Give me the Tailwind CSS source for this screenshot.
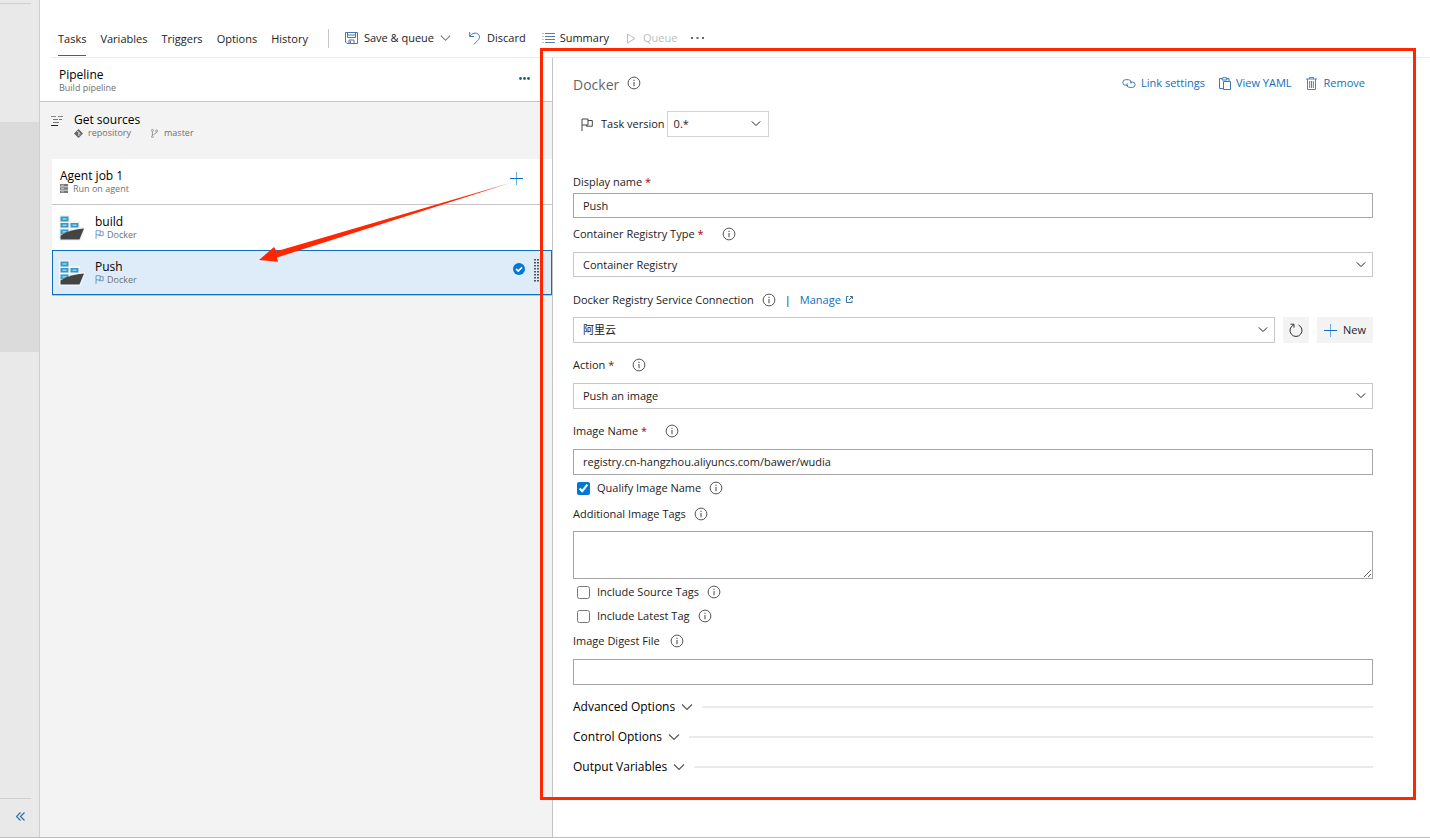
<!DOCTYPE html>
<html lang="en">
<head>
<meta charset="utf-8">
<title>Build pipeline - Docker task</title>
<script src="https://cdn.jsdelivr.net/npm/@tailwindcss/browser@4"></script>
</head>
<body class="bg-white text-[11px] leading-4 text-[#222] font-['Open_Sans','Noto_Sans_CJK_SC',sans-serif]">

<!-- Shared icons -->
<svg class="hidden" aria-hidden="true">
  <symbol id="info" viewBox="0 0 14 14"><circle cx="7" cy="7" r="5.9" fill="none" stroke="#555" stroke-width="1"/><path d="M7 6v4.2M7 3.8v1.2" stroke="#555" stroke-width="1.1"/></symbol>
  <symbol id="chevron" viewBox="0 0 12 8"><path d="M1 1.5l5 5 5-5" fill="none" stroke="currentColor" stroke-width="1.2"/></symbol>
  <symbol id="flag" viewBox="0 0 12 13"><path d="M1 13V1h6v6H1M7 2.5h4.3v5.7H5.5V7" fill="none" stroke="currentColor" stroke-width="1"/></symbol>
  <symbol id="plus" viewBox="0 0 13 13"><path d="M6.5 0v13" stroke="#69aee6"/><path d="M0 6.5h13" stroke="#106ebe"/></symbol>
  <symbol id="ship" viewBox="0 0 26 26">
    <path d="M0 0h11v6h10v6h5l-4 14H0z" fill="#f1f3f4"/>
    <g fill="#3999c6"><path d="M1.5 1.5h8v5h-8zM1.5 8h8v4.500h-8zM11.500 8h8v4.500h-8zM1.500 14.500h8v3l-8 2z"/></g>
    <g fill="#8fd3ee"><path d="M3.500 3.200h4v1.600h-4zM3.500 9.500h4v1.500h-4zM13.500 9.500h4v1.500h-4zM3.500 16h4v1l-4 1z"/></g>
    <path d="M1.500 20.500Q12 14 25 13.500L20.500 24.500h-19z" fill="#444"/>
  </symbol>
</svg>

<div class="relative flex min-h-screen border-b border-[#bdbdbd]">

  <nav class="flex w-10 shrink-0 flex-col border-r border-[#cfcfcf] bg-[#e9e9e9]" aria-label="Project">
    <div class="h-[122px] pt-[3px]"><div class="mr-2 h-px bg-[#cfcfcf]"></div></div>
    <div class="h-[230px] bg-[#dbdbdb]"></div>
    <div class="mt-auto">
      <div class="mr-2 h-px bg-[#cfcfcf]"></div>
      <button type="button" class="flex h-[38px] w-full items-center justify-center pb-1 pl-[2px]" aria-label="Collapse">
        <svg class="h-[9px] w-[9px]" viewBox="0 0 9 9"><path d="M4.500.5l-4 4 4 4M8.500.5l-4 4 4 4" fill="none" stroke="#2b6da8" stroke-width="1.200"/></svg>
      </button>
    </div>
  </nav>

  <main class="flex min-w-0 grow flex-col">
    <header class="ml-[11px] flex h-[58px] items-end border-b border-[#eaeaea] pl-[7px]">
      <div class="mb-px flex gap-[14px]" role="tablist">
        <button role="tab" aria-selected="true" class="h-[26px] border-b border-[#106ebe] pb-[7px]">Tasks</button>
        <button role="tab" class="h-[26px] border-b border-transparent pb-[7px]">Variables</button>
        <button role="tab" class="h-[26px] border-b border-transparent pb-[7px]">Triggers</button>
        <button role="tab" class="h-[26px] border-b border-transparent pb-[7px]">Options</button>
        <button role="tab" class="h-[26px] border-b border-transparent pb-[7px]">History</button>
      </div>
      <div class="mb-[9px] ml-5 h-[19px] w-px bg-[#c8c8c8]"></div>
      <div class="flex h-[38px] items-center">
        <button type="button" class="ml-4 flex items-center">
          <svg class="mr-[6px] h-3 w-[13px]" viewBox="0 0 13 12" fill="none" stroke="#4a78a8"><path d="M.5.5h12v11H2l-1.500-1.500zM2.500.5v5h8v-5M4 11.500v-3.500h5v3.500M5.500 9v2M2.500 3h8"/></svg>
          Save &amp; queue
          <svg class="ml-[6px] h-2 w-[11px] text-[#777]"><use href="#chevron"/></svg>
        </button>
        <button type="button" class="ml-[18px] flex items-center">
          <svg class="mr-[7px] h-[13px] w-[11px]" viewBox="0 0 11 13" fill="none" stroke="#3c78b8"><path d="M.7 0v4.500H5M.7 4.300C3 1 7 .2 9.200 2.200c2.400 2.200 1.200 4.600-.4 6.200L5 12.300"/></svg>
          Discard
        </button>
        <button type="button" class="ml-4 flex items-center">
          <svg class="mr-[5px] h-[10px] w-[13px]" viewBox="0 0 13 10" stroke="#5a7ea8"><path d="M0 .5h2M0 3.500h2M0 6.500h2M0 9.500h2" stroke="#b9c4d0"/><path d="M3 .5h10M3 3.500h10M3 6.500h10M3 9.500h10"/></svg>
          Summary
        </button>
        <button type="button" disabled class="ml-[18px] flex items-center text-[#bdbdbd]">
          <svg class="mr-[7px] h-[11px] w-[9px]" viewBox="0 0 9 11"><path d="M.5 1v9l7.500-4.500z" fill="none" stroke="#bdbdbd"/></svg>
          Queue
        </button>
        <button type="button" class="ml-[14px]" aria-label="More"><svg class="h-[2px] w-[14px]" viewBox="0 0 14 2"><path d="M0 0h2v2H0zM5.500 0h2v2h-2zM11 0h2v2h-2z" fill="#666"/></svg></button>
      </div>
    </header>

    <div class="flex grow">
      <section class="w-[513px] shrink-0 border-r border-[#c4c4c4] bg-[#f3f3f3]" aria-label="Pipeline">
        <div class="flex h-11 items-center justify-between border-b border-[#c4c4c4] bg-white pr-[22px] pl-[19px]">
          <div class="pt-[3px]">
            <div class="text-[12px] leading-[14px] text-black">Pipeline</div>
            <div class="text-[9px] leading-3 text-[#707070]">Build pipeline</div>
          </div>
          <button type="button" class="pb-[2px]" aria-label="Pipeline menu"><svg class="h-[3px] w-[11px]" viewBox="0 0 11 3" fill="#1a5c9c"><circle cx="1.500" cy="1.500" r="1.400"/><circle cx="5.500" cy="1.500" r="1.400"/><circle cx="9.500" cy="1.500" r="1.400"/></svg></button>
        </div>

        <div class="flex h-[57px] pt-[11px] pl-[11px]">
          <svg class="mt-[3px] mr-[11px] h-[10px] w-3" viewBox="0 0 12 10"><path d="M0 .5h5M7 .5h5" stroke="#888"/><path d="M2 3.500h5M8 3.500h3M2 6.500h6" stroke="#777"/><path d="M0 9.500h7" stroke="#222"/></svg>
          <div>
            <div class="text-[12px] leading-[14px] text-black">Get sources</div>
            <div class="flex items-center text-[9px] leading-3 text-[#707070]">
              <svg class="mr-[5px] h-[9px] w-[9px]" viewBox="0 0 9 9"><path d="M4.500 0L9 4.500 4.500 9 0 4.500z" fill="#666"/><path d="M3.300 2l1.500 1.500v3.500M4.800 3.500l1.700 1.500" fill="none" stroke="#f3f3f3" stroke-width=".9"/></svg>
              repository
              <svg class="mr-[6px] ml-5 h-[9px] w-[7px]" viewBox="0 0 7 9" fill="none" stroke="#888" stroke-width=".8"><circle cx="1.400" cy="1.400" r="1"/><circle cx="5.600" cy="2" r="1"/><circle cx="1.400" cy="7.600" r="1"/><path d="M1.400 2.400v4.200M5.600 3c0 2-3 1.800-4.200 3"/></svg>
              master
            </div>
          </div>
        </div>

        <div class="ml-3">
          <div class="flex h-[46px] items-center justify-between border-b border-[#c4c4c4] bg-white pr-[29px] pl-2">
            <div>
              <div class="text-[12px] leading-[14px] text-black">Agent job 1</div>
              <div class="flex items-center text-[9px] leading-3 text-[#707070]">
                <svg class="mr-[5px] h-[9px] w-2" viewBox="0 0 8 9"><path d="M0 0h8v2.400H0zM0 3.300h8v2.400H0zM0 6.600h8v2.400H0z" fill="#777"/><path d="M1 1.200h3M1 4.500h3M1 7.800h3" stroke="#ddd" stroke-width=".7"/></svg>
                Run on agent
              </div>
            </div>
            <button type="button" class="-mt-[6px]" aria-label="Add task"><svg class="h-[13px] w-[13px]"><use href="#plus"/></svg></button>
          </div>
          <div class="flex h-[45px] items-center bg-white pl-[7px]">
            <svg class="mr-[10px] h-[26px] w-[26px]"><use href="#ship"/></svg>
            <div>
              <div class="text-[12px] leading-[14px] text-black">build</div>
              <div class="flex items-center text-[9px] leading-3 text-[#707070]"><svg class="mr-[3px] h-[9px] w-[9px] text-[#3f78b5]"><use href="#flag"/></svg>Docker</div>
            </div>
          </div>
          <div class="flex h-[45px] items-center border border-[#106ebe] bg-[#deecf9] pr-[8px] pl-[6px] shadow-[0_1px_0_#c4c4c4]">
            <svg class="mr-[10px] h-[26px] w-[26px]"><use href="#ship"/></svg>
            <div>
              <div class="text-[12px] leading-[14px] text-black">Push</div>
              <div class="flex items-center text-[9px] leading-3 text-[#707070]"><svg class="mr-[3px] h-[9px] w-[9px] text-[#3f78b5]"><use href="#flag"/></svg>Docker</div>
            </div>
            <svg class="mr-[9px] mb-[7px] ml-auto h-3 w-3" viewBox="0 0 12 12"><circle cx="6" cy="6" r="6" fill="#0078d7"/><path d="M3 5.800l2.200 2.200L9 4.300" fill="none" stroke="#fff" stroke-width="1.700"/></svg>
            <svg class="mb-1 h-6 w-[9px]" viewBox="0 0 9 24"><path d="M1 0v24M4 0v24M7 0v24" stroke="#222" stroke-width="1.500" stroke-dasharray="1.400 1.600"/></svg>
          </div>
        </div>
      </section>

      <form class="min-w-0 grow pr-[57px] pl-5">
        <div class="flex h-[50px] items-center text-[#106ebe]">
          <h1 class="mt-1 mr-2 text-[14px] leading-5 text-[#666]">Docker</h1>
          <svg class="h-[14px] w-[14px]"><use href="#info"/></svg>
          <button type="button" class="ml-auto flex items-center">
            <svg class="mr-[5px] h-[9px] w-[14px]" viewBox="0 0 14 9" fill="none" stroke="#3c78c0"><path d="M6 6.300H3.600a2.800 2.800 0 010-5.600h2.800a2.800 2.800 0 012.500 4"/><path d="M8 3h2.400a2.700 2.700 0 010 5.400H7.600a2.700 2.700 0 01-2.400-4"/></svg>Link settings</button>
          <button type="button" class="ml-[14px] flex items-center">
            <svg class="mr-[5px] h-[13px] w-3" viewBox="0 0 12 13" fill="none" stroke="#3c78c0"><path d="M4.500 11.500h-4v-10h2.500M7.500 1.500H10V4M3 1h1.500V.3h2V1H8v2H3zM4.500 4.500h7v8h-7z"/></svg>View YAML</button>
          <button type="button" class="mr-2 ml-[14px] flex items-center">
            <svg class="mr-[7px] h-[13px] w-[11px]" viewBox="0 0 11 13" fill="none" stroke="#5a7cc4"><path d="M0 2h11M3.500 2V.5h4V2M1.500 2v10.500h8V2M3.700 4v7M5.500 4v7M7.300 4v7"/></svg>Remove</button>
        </div>

        <div class="mt-[3px] flex h-[26px] items-center pl-2">
          <svg class="mr-2 h-[13px] w-3 text-[#444]"><use href="#flag"/></svg>
          <label for="version" class="mr-[2px]">Task version</label>
          <div class="relative h-full w-[102px]">
            <select id="version" class="h-full w-full appearance-none border border-[#d4d4d4] bg-white pl-[6px]"><option>0.*</option></select>
            <svg class="pointer-events-none absolute top-[9px] right-2 h-[7px] w-[10px]"><use href="#chevron"/></svg>
          </div>
        </div>

        <div class="mt-[34px] flex h-[22px] items-center"><label for="display">Display name <span class="text-[#a80000]">*</span></label></div>
        <input id="display" type="text" value="Push" class="block h-[25px] w-full border border-[#a6a6a6] px-[9px]">

        <div class="mb-[2px] flex h-8 items-center"><label for="type">Container Registry Type <span class="text-[#a80000]">*</span></label><svg class="ml-[18px] h-[14px] w-[14px]"><use href="#info"/></svg></div>
        <div class="relative">
          <select id="type" class="block h-[25px] w-full appearance-none border border-[#c8c8c8] bg-white px-[9px]"><option>Container Registry</option></select>
          <svg class="pointer-events-none absolute top-[9px] right-[7px] h-[7px] w-[10px]"><use href="#chevron"/></svg>
        </div>

        <div class="flex h-10 items-center pt-[5px]"><label for="conn">Docker Registry Service Connection</label><svg class="ml-2 h-[14px] w-[14px]"><use href="#info"/></svg>
          <span class="mx-[9px]">|</span><a href="#" class="flex items-center text-[#106ebe]">Manage
          <svg class="ml-[5px] h-[7px] w-[7px]" viewBox="0 0 7 7" fill="none" stroke="#3c6ea0"><path d="M2.500.5h-2v6h5.500V4.500M3 4l3.300-3.300M4 .5h2.500V3"/></svg></a></div>
        <div class="flex h-[26px] gap-2">
          <div class="relative grow">
            <select id="conn" class="block h-full w-full appearance-none border border-[#c8c8c8] bg-white px-[9px]"><option>阿里云</option></select>
            <svg class="pointer-events-none absolute top-[9px] right-[7px] h-[7px] w-[10px]"><use href="#chevron"/></svg>
          </div>
          <button type="button" class="flex w-[26px] items-center justify-center bg-[#f3f3f3]" aria-label="Refresh">
            <svg class="h-[15px] w-[14px]" viewBox="0 0 14 15" fill="none" stroke="#333"><path d="M4.500 2a6 6 0 105 0M1.500 1.200h3.500V4.700"/></svg></button>
          <button type="button" class="flex w-14 items-center justify-center bg-[#f3f3f3]">
            <svg class="mr-[6px] h-[13px] w-[13px]"><use href="#plus"/></svg>New</button>
        </div>

        <div class="flex h-10 items-center pt-1"><label for="action">Action <span class="text-[#a80000]">*</span></label><svg class="ml-[18px] h-[14px] w-[14px]"><use href="#info"/></svg></div>
        <div class="relative">
          <select id="action" class="block h-[26px] w-full appearance-none border border-[#c8c8c8] bg-white px-[9px]"><option>Push an image</option></select>
          <svg class="pointer-events-none absolute top-[9px] right-[7px] h-[7px] w-[10px]"><use href="#chevron"/></svg>
        </div>

        <div class="flex h-10 items-center pt-1"><label for="image">Image Name <span class="text-[#a80000]">*</span></label><svg class="ml-[18px] h-[14px] w-[14px]"><use href="#info"/></svg></div>
        <input id="image" type="text" value="registry.cn-hangzhou.aliyuncs.com/bawer/wudia" class="block h-[26px] w-full border border-[#a6a6a6] px-[9px] pb-[2px]">

        <div class="flex h-[26px] items-center pl-1"><input id="qualify" type="checkbox" checked class="mr-[7px] h-[13px] w-[13px] accent-[#0078d7]"><label for="qualify">Qualify Image Name</label><svg class="ml-2 h-[14px] w-[14px]"><use href="#info"/></svg></div>
        <div class="mb-1 flex h-[26px] items-center"><label for="tags">Additional Image Tags</label><svg class="ml-2 h-[14px] w-[14px]"><use href="#info"/></svg></div>
        <textarea id="tags" class="block h-12 w-full border border-[#a6a6a6] px-[9px]"></textarea>
        <div class="flex h-[26px] items-center pl-1"><input id="source" type="checkbox" class="mr-[7px] h-[13px] w-[13px]"><label for="source">Include Source Tags</label><svg class="ml-2 h-[14px] w-[14px]"><use href="#info"/></svg></div>
        <div class="flex h-[22px] items-center pl-1"><input id="latest" type="checkbox" class="mr-[7px] h-[13px] w-[13px]"><label for="latest">Include Latest Tag</label><svg class="ml-2 h-[14px] w-[14px]"><use href="#info"/></svg></div>
        <div class="mb-[4px] flex h-7 items-center"><label for="digest">Image Digest File</label><svg class="ml-[10px] h-[14px] w-[14px]"><use href="#info"/></svg></div>
        <input id="digest" type="text" class="block h-[26px] w-full border border-[#a6a6a6] px-[9px]">

        <div class="mt-[7px] text-[12px] text-black">
          <button type="button" class="flex h-[30px] w-full items-center">Advanced Options<svg class="mr-[9px] ml-[6px] h-[8px] w-[12px] text-[#555]"><use href="#chevron"/></svg><span class="h-[2px] grow bg-[#eaeaea]"></span></button>
          <button type="button" class="flex h-[30px] w-full items-center">Control Options<svg class="mr-[9px] ml-[6px] h-[8px] w-[12px] text-[#555]"><use href="#chevron"/></svg><span class="h-[2px] grow bg-[#eaeaea]"></span></button>
          <button type="button" class="flex h-[30px] w-full items-center">Output Variables<svg class="mr-[9px] ml-[6px] h-[8px] w-[12px] text-[#555]"><use href="#chevron"/></svg><span class="h-[2px] grow bg-[#eaeaea]"></span></button>
        </div>
      </form>
    </div>
  </main>

  <!-- Annotations: highlight frame and arrow -->
  <div class="pointer-events-none absolute top-12 right-[14px] bottom-[37px] left-[540px] border-3 border-[#ff2600]"></div>
  <svg class="pointer-events-none absolute top-[180px] left-[256px] h-[90px] w-[260px]" viewBox="256 180 260 90" aria-hidden="true"><path d="M259 260l15-13 2.500 4.200L513 182 277 257.500l1 4.200z" fill="#ff2600"/></svg>
</div>
</body>
</html>
